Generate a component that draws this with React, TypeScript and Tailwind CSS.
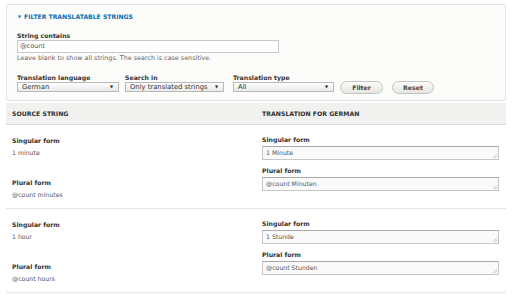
import React from "react";

const font = "font-['DejaVu_Sans',sans-serif]";

function Select({ value, width }: { value: string; width: string }) {
  return (
    <div
      className={`${width} h-[10px] flex items-center justify-between border border-[#b9b9b9] bg-gradient-to-b from-[#fdfdfd] to-[#e9e9e9] pl-[4px] pr-[5px] overflow-hidden`}
    >
      <span className="text-[6.8px] leading-none text-[#333] whitespace-nowrap">
        {value}
      </span>
      <span className="text-[4px] leading-none text-[#222]">▼</span>
    </div>
  );
}

function Button({ label, width }: { label: string; width: string }) {
  return (
    <div
      className={`${width} h-[13px] rounded-full border border-[#c4c4c0] bg-gradient-to-b from-[#fbfbf9] to-[#e6e6e2] flex items-center justify-center text-[6.2px] font-bold text-[#444]`}
    >
      {label}
    </div>
  );
}

function Field({ value }: { value: string }) {
  return (
    <div className="relative w-[237px] h-[14px] border border-[#c6c6c6] border-t-[#a8a8a8] bg-[#fafafa] pl-[3px] flex items-center">
      <span className="text-[6.2px] leading-none text-[#555]">{value}</span>
      <svg
        className="absolute right-[1px] bottom-[1px]"
        width="5"
        height="5"
        viewBox="0 0 5 5"
      >
        <path d="M1 5 L5 1 M3 5 L5 3" stroke="#aaa" strokeWidth="0.6" />
      </svg>
    </div>
  );
}

function Label({ children }: { children: React.ReactNode }) {
  return (
    <div className="text-[6.2px] leading-[8px] font-bold text-[#333] whitespace-nowrap">
      {children}
    </div>
  );
}

function Row({
  source,
  plural,
  target,
  targetPlural,
}: {
  source: string;
  plural: string;
  target: string;
  targetPlural: string;
}) {
  return (
    <div className="grid grid-cols-[250px_1fr] h-[84px] border-b border-[#e6e6e2] pl-[6px]">
      <div className="pt-[12px]">
        <Label>Singular form</Label>
        <div className="mt-[4px] text-[6.2px] leading-[8px] text-[#555]">
          {source}
        </div>
        <div className="mt-[22px]">
          <Label>Plural form</Label>
        </div>
        <div className="mt-[4px] text-[6.2px] leading-[8px] text-[#555]">
          {plural}
        </div>
      </div>
      <div className="pt-[11px]">
        <Label>Singular form</Label>
        <div className="mt-[2px]">
          <Field value={target} />
        </div>
        <div className="mt-[7px]">
          <Label>Plural form</Label>
        </div>
        <div className="mt-[2px]">
          <Field value={targetPlural} />
        </div>
      </div>
    </div>
  );
}

export default function App() {
  return (
    <div className={`w-[512px] h-[295px] bg-white px-[6px] pt-[4px] ${font}`}>
      <div className="h-[97px] border border-[#e2e2de] rounded-[2px] bg-[#fcfcfa] pl-[10px] pt-[9px]">
        <div className="flex items-center gap-[3px] text-[6.1px] leading-[6px] font-bold text-[#0a6eb4] uppercase pl-[1px]">
          <span className="text-[4px]">▼</span>
          <span>Filter translatable strings</span>
        </div>
        <div className="mt-[12px]">
          <Label>String contains</Label>
        </div>
        <div className="w-[262px] h-[13px] border border-[#c8c8c8] bg-white pl-[2px] flex items-center">
          <span className="text-[6.6px] leading-none text-[#555]">@count</span>
        </div>
        <div className="mt-[1px] text-[6.4px] leading-[8px] text-[#666]">
          Leave blank to show all strings. The search is case sensitive.
        </div>
        <div className="mt-[12px] flex items-end">
          <div className="w-[108px]">
            <Label>Translation language</Label>
            <Select value="German" width="w-[102px]" />
          </div>
          <div className="w-[108px]">
            <Label>Search in</Label>
            <Select value="Only translated strings" width="w-[99px]" />
          </div>
          <div className="w-[107px]">
            <Label>Translation type</Label>
            <Select value="All" width="w-[101px]" />
          </div>
          <div className="flex gap-[9px] mb-[-2px]">
            <Button label="Filter" width="w-[43px]" />
            <Button label="Reset" width="w-[42px]" />
          </div>
        </div>
      </div>
      <div className="mt-[2px] h-[22px] bg-[#f1f1ef] border-b border-[#dcdcd8] grid grid-cols-[250px_1fr] items-center pl-[6px] text-[6.2px] font-bold text-[#333] uppercase">
        <span>Source string</span>
        <span>Translation for German</span>
      </div>
      <Row
        source="1 minute"
        plural="@count minutes"
        target="1 Minute"
        targetPlural="@count Minuten"
      />
      <Row
        source="1 hour"
        plural="@count hours"
        target="1 Stunde"
        targetPlural="@count Stunden"
      />
    </div>
  );
}
